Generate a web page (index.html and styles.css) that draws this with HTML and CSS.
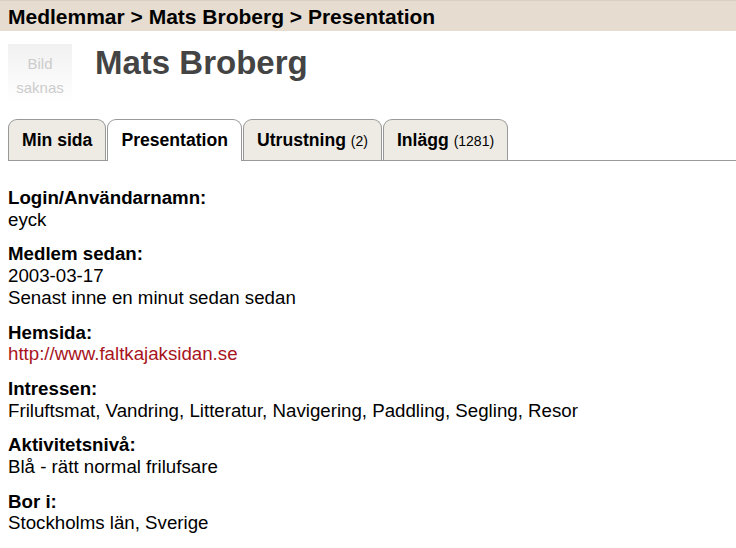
FILE: index.html
```html
<!DOCTYPE html>
<html lang="sv">
<head>
<meta charset="utf-8">
<title>Mats Broberg - Presentation</title>
<link rel="stylesheet" href="styles.css">
</head>
<body>
<div class="crumbs">Medlemmar &gt; Mats Broberg &gt; Presentation</div>
<div class="page">
  <div class="profile-head">
    <div class="avatar">Bild<br>saknas</div>
    <h1 class="name">Mats Broberg</h1>
  </div>
  <ul class="tabs">
    <li class="tab">Min sida</li>
    <li class="tab active">Presentation</li>
    <li class="tab">Utrustning <span class="count">(2)</span></li>
    <li class="tab">Inlägg <span class="count">(1281)</span></li>
  </ul>
  <div class="info">
    <div class="group">
      <div class="label">Login/Användarnamn:</div>
      <div class="value">eyck</div>
    </div>
    <div class="group">
      <div class="label">Medlem sedan:</div>
      <div class="value">2003-03-17</div>
      <div class="value">Senast inne en minut sedan sedan</div>
    </div>
    <div class="group">
      <div class="label">Hemsida:</div>
      <div class="value"><a class="link" href="#">http://www.faltkajaksidan.se</a></div>
    </div>
    <div class="group">
      <div class="label">Intressen:</div>
      <div class="value">Friluftsmat, Vandring, Litteratur, Navigering, Paddling, Segling, Resor</div>
    </div>
    <div class="group">
      <div class="label">Aktivitetsnivå:</div>
      <div class="value">Blå - rätt normal frilufsare</div>
    </div>
    <div class="group">
      <div class="label">Bor i:</div>
      <div class="value">Stockholms län, Sverige</div>
    </div>
  </div>
</div>
</body>
</html>
```
FILE: styles.css
```css
html, body {
  margin: 0;
  padding: 0;
  background: #fff;
  font-family: "Liberation Sans", Arial, sans-serif;
  color: #000;
}
.crumbs {
  background: #e6ddd0;
  border-top: 1px solid #d8d0c4;
  padding: 4px 8px 2px;
  height: 24px;
  font-size: 21px;
  font-weight: bold;
  line-height: 24px;
  white-space: nowrap;
}
.page {
  padding: 0 0 0 8px;
}
.profile-head {
  display: flex;
  align-items: flex-start;
  gap: 23px;
  padding-top: 13px;
}
.avatar {
  width: 64px;
  height: 60px;
  box-sizing: border-box;
  padding-top: 8px;
  background: linear-gradient(#f1f1f1, #ffffff);
  color: #cccccc;
  font-size: 15px;
  line-height: 24px;
  text-align: center;
}
.name {
  margin: 0;
  font-size: 33px;
  font-weight: bold;
  color: #444;
  line-height: 37px;
}
.tabs {
  list-style: none;
  margin: 15px 0 0;
  padding: 0;
  display: flex;
  gap: 1px;
  border-bottom: 1px solid #999;
}
.tab {
  background: #eeebe4;
  border: 1px solid #999;
  border-bottom: none;
  border-radius: 9px 9px 0 0;
  padding: 10px 13px 9px;
  font-size: 17.6px;
  font-weight: bold;
  line-height: 20px;
}
.tab.active {
  background: #fff;
  margin-bottom: -1px;
  padding-bottom: 10px;
}
.count {
  font-size: 14px;
  font-weight: normal;
}
.info {
  padding-top: 26px;
  font-size: 18.7px;
  line-height: 21.7px;
}
.group {
  margin-bottom: 13px;
}
.label {
  font-weight: bold;
}
.link {
  color: #a8141c;
  text-decoration: none;
}
```
